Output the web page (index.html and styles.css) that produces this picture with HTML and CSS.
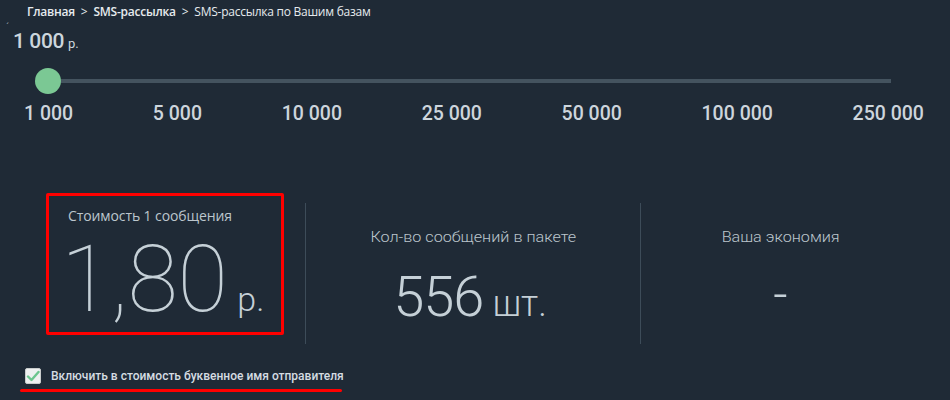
FILE: index.html
```html
<!DOCTYPE html>
<html lang="ru">
<head>
<meta charset="utf-8">
<link rel="stylesheet" href="styles.css">
</head>
<body>
<div class="page">
  <nav class="crumbs">
    <span class="crumb strong">Главная</span>
    <span class="sep">&gt;</span>
    <span class="crumb strong">SMS-рассылка</span>
    <span class="sep">&gt;</span>
    <span class="crumb">SMS-рассылка по Вашим базам</span>
  </nav>
  <div class="amount"><span class="tickmark">´</span><span class="amount-num">1 000</span><span class="amount-unit">р.</span></div>
  <div class="slider">
    <div class="track"></div>
    <div class="knob"></div>
  </div>
  <div class="ticks">
    <span>1 000</span>
    <span>5 000</span>
    <span>10 000</span>
    <span>25 000</span>
    <span>50 000</span>
    <span>100 000</span>
    <span>250 000</span>
  </div>
  <div class="stats">
    <div class="stat first">
      <div class="highlight">
        <div class="stat-label wide">Стоимость 1 сообщения</div>
        <div class="price"><span class="price-num">1,80</span><span class="price-unit">р.</span></div>
      </div>
    </div>
    <div class="stat second">
      <div class="stat-label">Кол-во сообщений в пакете</div>
      <div class="count"><span class="count-num">556</span><span class="count-unit">шт.</span></div>
    </div>
    <div class="stat third">
      <div class="stat-label">Ваша экономия</div>
      <div class="dash">-</div>
    </div>
  </div>
  <label class="option">
    <span class="checkbox">
      <svg width="14" height="12" viewBox="0 0 14 12"><path d="M2 6.5 L5.5 10 L12.5 2" fill="none" stroke="#6cc58e" stroke-width="2.4" stroke-linecap="round" stroke-linejoin="round"/></svg>
    </span>
    <span class="option-text">Включить в стоимость буквенное имя отправителя</span>
  </label>
  <div class="underline"></div>
</div>
</body>
</html>
```

FILE: styles.css
```css
html, body {
  margin: 0;
  padding: 0;
  background: #1f2a36;
}
.page {
  width: 950px;
  height: 400px;
  overflow: hidden;
  background: #1f2a36;
  color: #d3dbe1;
  font-family: "Open Sans", "Liberation Sans", sans-serif;
  position: relative;
}
.crumbs {
  display: flex;
  gap: 5px;
  padding: 3px 0 0 27px;
  font-size: 12px;
  line-height: 17px;
  color: #e6eaee;
  letter-spacing: -0.25px;
}
.crumb.strong { font-weight: 600; }
.sep { padding: 0 1px; }
.amount {
  display: flex;
  align-items: baseline;
  padding: 9px 0 0 13px;
  height: 28px;
  font-family: Roboto, "Liberation Sans", sans-serif;
  color: #ccd6dd;
}
.tickmark {
  position: absolute;
  left: 6px;
  top: 22px;
  font-size: 10px;
  color: #9aa6b0;
}
.amount-num {
  font-size: 21px;
  font-weight: 500;
  letter-spacing: -0.4px;
}
.amount-unit {
  font-size: 13px;
  margin-left: 4px;
}
.slider {
  position: relative;
  height: 28px;
  margin: 10px 0 0 35px;
  width: 856px;
}
.track {
  position: absolute;
  left: 12px;
  right: 0;
  top: 12px;
  height: 4px;
  background: #44535f;
}
.knob {
  position: absolute;
  left: 0;
  top: 1px;
  width: 26px;
  height: 26px;
  border-radius: 50%;
  background: #7bc894;
}
.ticks {
  display: flex;
  justify-content: space-between;
  margin: 7px 26px 0 24px;
  font-family: Roboto, "Liberation Sans", sans-serif;
  font-weight: 500;
  font-size: 19.5px;
  line-height: 24px;
  color: #cdd5dc;
}
.stats {
  display: flex;
  margin-top: 67px;
  height: 160px;
}
.stat {
  display: flex;
  flex-direction: column;
  align-items: center;
  font-family: Roboto, "Liberation Sans", sans-serif;
}
.stat.first {
  width: 305px;
  align-items: flex-start;
  padding-left: 46px;
  box-sizing: border-box;
}
.stat.second {
  width: 335px;
  border-left: 1px solid #3d4c59;
  margin-top: 10px;
  height: 141px;
  padding: 24px 6px 0 0;
  box-sizing: border-box;
}
.stat.third {
  width: 280px;
  border-left: 1px solid #3d4c59;
  margin-top: 10px;
  height: 141px;
  padding-top: 24px;
  box-sizing: border-box;
}
.highlight {
  width: 238px;
  height: 142px;
  box-sizing: border-box;
  border: 3px solid #ff0000;
  border-radius: 2px;
  padding: 11px 0 0 19px;
}
.stat-label {
  font-size: 15px;
  font-weight: 300;
  color: #bcc6cd;
  line-height: 20px;
  transform: scaleX(1.08);
}
.stat-label.wide {
  font-family: "Open Sans", "Liberation Sans", sans-serif;
  font-weight: 400;
  font-size: 14px;
  line-height: 18px;
  transform: none;
  letter-spacing: -0.1px;
}
.second .stat-label { margin-left: 6px; }
.price {
  display: flex;
  align-items: baseline;
  margin-top: 20px;
  margin-left: -7px;
  color: #c5d0d7;
  line-height: 70px;
  height: 70px;
}
.price-num {
  font-size: 92px;
  font-weight: 100;
  letter-spacing: -0.5px;
}
.price-unit {
  font-size: 34px;
  font-weight: 300;
  margin-left: 10px;
}
.count {
  display: flex;
  align-items: baseline;
  margin-top: 22px;
  color: #c5d0d7;
  line-height: 56px;
}
.count-num {
  font-size: 56px;
  font-weight: 300;
  letter-spacing: -1px;
}
.count-unit {
  font-size: 36px;
  font-weight: 300;
  margin-left: 9px;
}
.dash {
  margin-top: 17px;
  font-size: 50px;
  font-weight: 300;
  line-height: 60px;
  color: #c5d0d7;
}
.option {
  display: flex;
  align-items: center;
  gap: 10px;
  margin: 14px 0 0 25px;
  height: 18px;
}
.checkbox {
  width: 16px;
  height: 16px;
  box-sizing: border-box;
  background: #eef0f0;
  border: 1px solid #c8cccc;
  border-radius: 2px;
  display: flex;
  align-items: center;
  justify-content: center;
}
.option-text {
  font-family: Roboto, "Liberation Sans", sans-serif;
  font-size: 12px;
  font-weight: 500;
  color: #d5dce2;
}
.underline {
  margin: 4px 0 0 20px;
  width: 322px;
  height: 3px;
  background: #ff0000;
  border-radius: 2px;
}
```
